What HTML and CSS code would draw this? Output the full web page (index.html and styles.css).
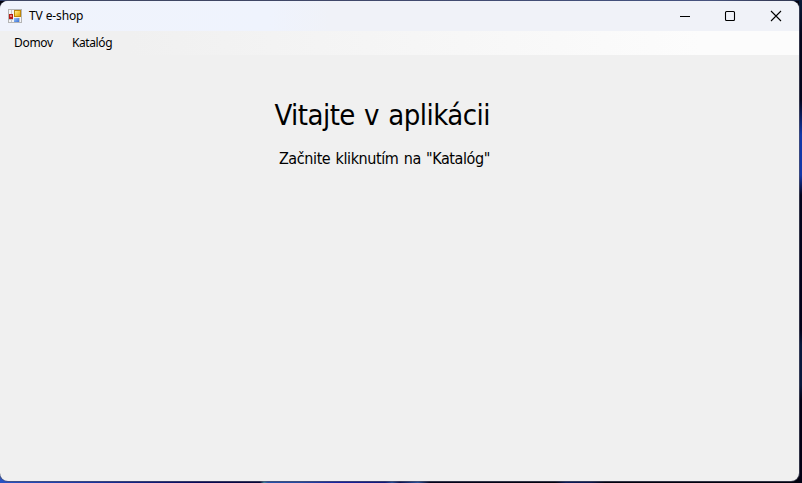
FILE: index.html
```
<!DOCTYPE html>
<html lang="sk">
<head>
<meta charset="utf-8">
<title>TV e-shop</title>
<link rel="stylesheet" href="styles.css">
</head>
<body>
<div class="window">
  <header class="titlebar">
    <svg class="app-icon" width="14" height="14" viewBox="0 0 14 14">
      <defs>
        <linearGradient id="gold" x2="1" y2="1"><stop stop-color="#fff3b0"/><stop offset=".5" stop-color="#f5cb3c"/><stop offset="1" stop-color="#d69a08"/></linearGradient>
        <linearGradient id="blue" x2="1" y2="1"><stop stop-color="#9bc8fa"/><stop offset="1" stop-color="#3a70d8"/></linearGradient>
      </defs>
      <rect x=".5" y=".5" width="13" height="13" fill="#f4f4f6" stroke="#b5b5b5"/>
      <path d="M3.500 1v12M1 10.500h4M11.500 9v4" stroke="#c5c5c8" fill="none"/>
      <rect x="1" y="5" width="4" height="5" fill="#b51c18"/>
      <rect x="2" y="6" width="2" height="2" fill="#ec8078"/>
      <rect x="6.500" y="1.500" width="6" height="6" fill="url(#gold)" stroke="#bd8608"/>
      <rect x="6" y="9" width="5" height="4" fill="url(#blue)"/>
    </svg>
    <span class="caption">TV e-shop</span>
    <div class="controls">
      <svg width="10" height="10" viewBox="0 0 10 10"><path d="M0 5.500h10"/></svg>
      <svg width="10" height="10" viewBox="0 0 10 10"><rect x=".5" y=".5" width="9" height="9" rx="1"/></svg>
      <svg width="10" height="10" viewBox="0 0 10 10"><path d="M0 0l10 10M10 0L0 10"/></svg>
    </div>
  </header>
  <nav class="menu"><span class="home">Domov</span><span class="catalog">Katalóg</span></nav>
  <main class="content">
    <h1>Vitajte v aplikácii</h1>
    <p>Začnite kliknutím na "Katalóg"</p>
  </main>
</div>
</body>
</html>
```
FILE: styles.css
```
* { box-sizing: border-box; }
body {
  margin: 0;
  width: 802px;
  height: 483px;
  padding: 1px 3px 2px 0;
  overflow: hidden;
  color: #000;
  font-family: "Noto Sans", "Open Sans", sans-serif;
  background:
    linear-gradient(90deg, #2c3a66 0, #25305c 220px, #3450a0 660px, #3d55a0 710px, #101c48 770px, #0a1a38) 0 0 / 100% 1px no-repeat,
    linear-gradient(#071b38 0, #03071c 35px, #02041c 100px, #1237a8 135px, #1237a8 175px, #02041c 195px, #010118 330px, #06183c 345px, #06183c 385px, #010114 400px) 100% 0 / 3px 100% no-repeat,
    linear-gradient(90deg, #2854c4 0, #1b35a0 90px, #080858 200px, #060638 260px, #398098 264px, #2450a8 268px, #2448a0 300px, #1820a0 340px, #101878 385px, #244c98 392px, #0b1150 400px, #28509a 418px, #04041c 430px, #02020e 555px, #0b1a58 566px, #0a154c 590px, #02020e 605px) 0 100% / 100% 8px no-repeat,
    #02020e;
}
.window {
  width: 799px;
  height: 480px;
  overflow: hidden;
  background: #f0f0f0;
  border-radius: 8px;
  box-shadow: 0 0 0 1px rgba(80, 84, 104, .6);
}
.titlebar {
  display: flex;
  align-items: center;
  height: 30px;
  padding: 0 18px 0 8px;
  background: linear-gradient(90deg, #f0f3fc 0, #eff3fd 270px, #f0f2f8 330px, #f0f2f8);
}
.app-icon { flex: none; margin-top: -1px; }
.caption {
  margin-left: 7px;
  font-size: 12px;
  line-height: 16px;
  letter-spacing: -.12px;
}
.controls { display: flex; gap: 35px; margin-left: auto; margin-top: -1px; }
.controls svg { overflow: visible; fill: none; stroke: #000; stroke-width: 1.100; }
.controls svg:last-child { margin-left: 1px; }
.menu {
  display: flex;
  height: 24px;
  padding-left: 14px;
  font-size: 12px;
  line-height: 24px;
  letter-spacing: -.4px;
  background: linear-gradient(90deg, #f0f0f0 130px, #fcfcfc 700px);
}
.home { width: 58px; letter-spacing: -.3px; }
.content {
  padding: 39px 309px 0 0;
  text-align: right;
  font-family: "DejaVu Sans Condensed", "DejaVu Sans", sans-serif;
  font-stretch: condensed;
}
h1 {
  margin: 0;
  font-size: 29px;
  font-weight: 400;
  line-height: 42px;
  letter-spacing: -.53px;
  word-spacing: 1.500px;
  white-space: nowrap;
}
p {
  margin: 11px 0 0;
  font-size: 16px;
  line-height: 24px;
  letter-spacing: -.4px;
  word-spacing: 1px;
  white-space: nowrap;
}
```
